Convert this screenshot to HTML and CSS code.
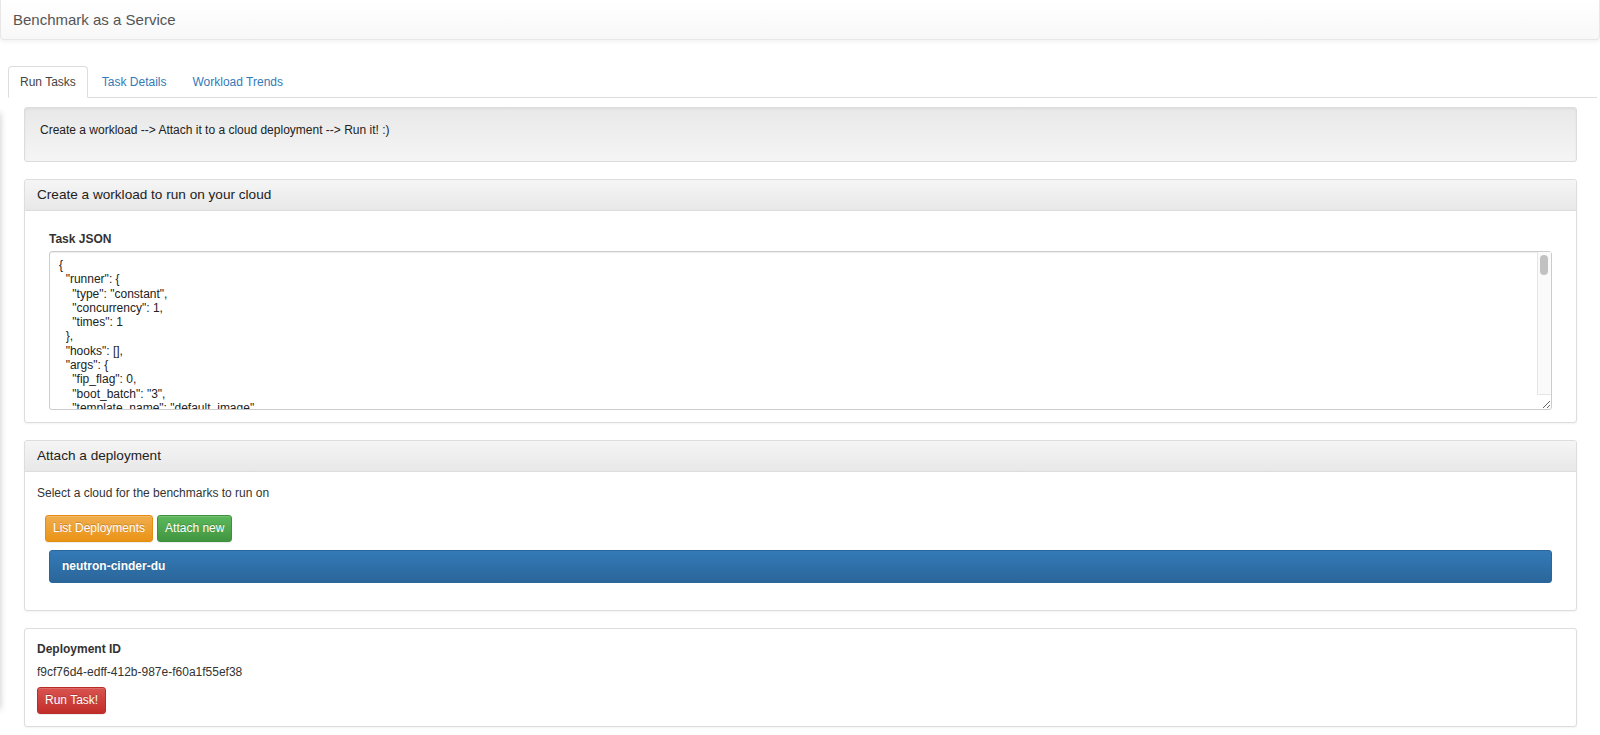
FILE: index.html
```html
<!DOCTYPE html>
<html lang="en">
<head>
  <meta charset="UTF-8">
  <meta name="viewport" content="width=device-width, initial-scale=1.0">
  <title>Benchmark as a Service</title>
  <link rel="stylesheet" href="styles.css">
</head>
<body>
  <nav class="navbar">
    <span class="navbar-brand">Benchmark as a Service</span>
  </nav>

  <div class="main">
    <ul class="nav-tabs">
      <li class="active"><a href="#run">Run Tasks</a></li>
      <li><a href="#details">Task Details</a></li>
      <li><a href="#trends">Workload Trends</a></li>
    </ul>

    <div class="tab-content">
      <div class="well">
        <p>Create a workload --&gt; Attach it to a cloud deployment --&gt; Run it! :)</p>
      </div>

      <div class="panel">
        <div class="panel-heading">Create a workload to run on your cloud</div>
        <div class="panel-body">
          <div class="form-group">
            <label for="task-json">Task JSON</label>
            <div class="json-box">
              <textarea id="task-json" class="task-json" spellcheck="false">{
  "runner": {
    "type": "constant",
    "concurrency": 1,
    "times": 1
  },
  "hooks": [],
  "args": {
    "fip_flag": 0,
    "boot_batch": "3",
    "template_name": "default_image",
    "flavor": {
      "name": "m1.tiny"
    },
    "image": {
      "name": "cirros"
    },
    "network_create_args": {},
    "subnet_create_args": {},
    "volume_size": 1,
    "detailed": true
  },
  "sla": {
    "failure_rate": {
      "max": 0
    }
  },
  "context": {
    "users": {
      "tenants": 1,
      "users_per_tenant": 1
    },
    "network": {
      "start_cidr": "10.2.0.0/24",
      "networks_per_tenant": 1
    }
  },
  "name": "NovaServers.boot_and_delete_server"
}</textarea>
              <div class="scroll-track"><div class="scroll-thumb"></div></div>
            </div>
          </div>
        </div>
      </div>

      <div class="panel">
        <div class="panel-heading">Attach a deployment</div>
        <div class="panel-body">
          <p>Select a cloud for the benchmarks to run on</p>
          <div class="btn-row">
            <button class="btn btn-warning">List Deployments</button>
            <button class="btn btn-success">Attach new</button>
          </div>
          <div class="list-group">
            <a href="#" class="list-group-item active">neutron-cinder-du</a>
          </div>
        </div>
      </div>

      <div class="panel">
        <div class="panel-body">
          <h5 class="field-label">Deployment ID</h5>
          <p class="deployment-id">f9cf76d4-edff-412b-987e-f60a1f55ef38</p>
          <button class="btn btn-danger">Run Task!</button>
        </div>
      </div>
    </div>
  </div>
</body>
</html>
```

FILE: styles.css
```css
body {
  margin: 0;
  font-family: "Liberation Sans", Arial, sans-serif;
  font-size: 12px;
  line-height: 17px;
  color: #333;
  background: #fff;
}

.navbar {
  display: flex;
  align-items: center;
  height: 39px;
  border: 1px solid #e7e7e7;
  border-top: 0;
  border-radius: 0 0 4px 4px;
  background: linear-gradient(to bottom, #fff 0%, #f8f8f8 100%);
  box-shadow: inset 0 1px 0 rgba(255, 255, 255, 0.15), 0 1px 5px rgba(0, 0, 0, 0.075);
}

.navbar-brand {
  padding-left: 12px;
  font-size: 15px;
  color: #555;
}

.main {
  padding: 26px 3px 0 8px;
}

.nav-tabs {
  display: flex;
  margin: 0;
  padding: 0;
  list-style: none;
  border-bottom: 1px solid #ddd;
}

.nav-tabs li {
  margin-right: 2px;
  margin-bottom: -1px;
}

.nav-tabs a {
  display: block;
  padding: 8px 11px;
  line-height: 14px;
  border: 1px solid transparent;
  border-radius: 4px 4px 0 0;
  color: #337ab7;
  text-decoration: none;
}

.nav-tabs .active a {
  color: #444;
  background: #fff;
  border-color: #ddd #ddd transparent;
}

.tab-content {
  position: relative;
  padding: 9px 20px 0 16px;
}

/* faint shadow of the collapsed sidebar on the left edge */
.tab-content::before {
  content: "";
  position: absolute;
  left: -22px;
  top: 15px;
  bottom: 18px;
  width: 14px;
  box-shadow: 0 0 7px rgba(0, 0, 0, 0.22);
}

.well {
  padding: 14px 15px 16px;
  margin-bottom: 17px;
  border: 1px solid #dcdcdc;
  border-radius: 3px;
  background: linear-gradient(to bottom, #e8e8e8 0%, #f5f5f5 100%);
  box-shadow: inset 0 1px 3px rgba(0, 0, 0, 0.05), 0 1px 0 rgba(255, 255, 255, 0.1);
}

.well p {
  margin: 0 0 6px;
  color: #222;
}

.panel {
  margin-bottom: 17px;
  border: 1px solid #ddd;
  border-radius: 3px;
  background: #fff;
  box-shadow: 0 1px 2px rgba(0, 0, 0, 0.05);
}

.panel-heading {
  padding: 7px 12px;
  font-size: 13.6px;
  line-height: 16px;
  color: #222;
  border-bottom: 1px solid #ddd;
  border-radius: 3px 3px 0 0;
  background: linear-gradient(to bottom, #f5f5f5 0%, #e8e8e8 100%);
}

.panel-body {
  padding: 13px 12px 12px;
}

.form-group {
  padding: 8px 12px 0;
}

.form-group label {
  display: block;
  margin-bottom: 5px;
  font-weight: bold;
  line-height: 14px;
}

.json-box {
  position: relative;
}

.task-json {
  display: block;
  box-sizing: border-box;
  width: 100%;
  height: 159px;
  margin: 0;
  padding: 6px 24px 6px 9px;
  font-family: "Liberation Sans", Arial, sans-serif;
  font-size: 12px;
  line-height: 14.3px;
  color: #222;
  border: 1px solid #ccc;
  border-radius: 3px;
  box-shadow: inset 0 1px 1px rgba(0, 0, 0, 0.075);
  resize: vertical;
  outline: none;
  overflow: hidden;
}

/* overlay scrollbar drawn over the textarea's right edge */
.scroll-track {
  position: absolute;
  top: 1px;
  right: 1px;
  bottom: 15px;
  width: 13px;
  background: #fafafa;
  border-left: 1px solid #e6e6e6;
  border-bottom: 1px solid #e6e6e6;
}

.scroll-thumb {
  margin: 3px 0 0 2px;
  width: 8px;
  height: 20px;
  border-radius: 4px;
  background: #c1c1c1;
}

.panel-body p {
  margin: 0;
}

.btn-row {
  display: flex;
  gap: 4px;
  margin: 13px 0 0 8px;
}

.btn {
  display: inline-block;
  padding: 4px 7px;
  font-family: inherit;
  font-size: 12px;
  line-height: 17px;
  color: #fff;
  border: 1px solid transparent;
  border-radius: 3px;
  text-shadow: 0 -1px 0 rgba(0, 0, 0, 0.2);
  box-shadow: inset 0 1px 0 rgba(255, 255, 255, 0.15), 0 1px 1px rgba(0, 0, 0, 0.075);
  cursor: pointer;
}

.btn-warning {
  background: linear-gradient(to bottom, #f0ad4e 0%, #eb9316 100%);
  border-color: #e38d13;
}

.btn-success {
  background: linear-gradient(to bottom, #5cb85c 0%, #419641 100%);
  border-color: #3e8f3e;
}

.btn-danger {
  background: linear-gradient(to bottom, #d9534f 0%, #c12e2a 100%);
  border-color: #b92c28;
}

.list-group {
  margin: 8px 12px 15px;
}

.list-group-item {
  display: block;
  padding: 7px 12px;
  line-height: 17px;
  font-weight: bold;
  color: #fff;
  text-decoration: none;
  text-shadow: 0 -1px 0 #286090;
  border: 1px solid #2b669a;
  border-radius: 3px;
  background: linear-gradient(to bottom, #337ab7 0%, #2b669a 100%);
}

.field-label {
  margin: 0;
  font-size: 12px;
  line-height: 14px;
  font-weight: bold;
}

.panel-body .deployment-id {
  margin: 8px 0 6px;
}
```
